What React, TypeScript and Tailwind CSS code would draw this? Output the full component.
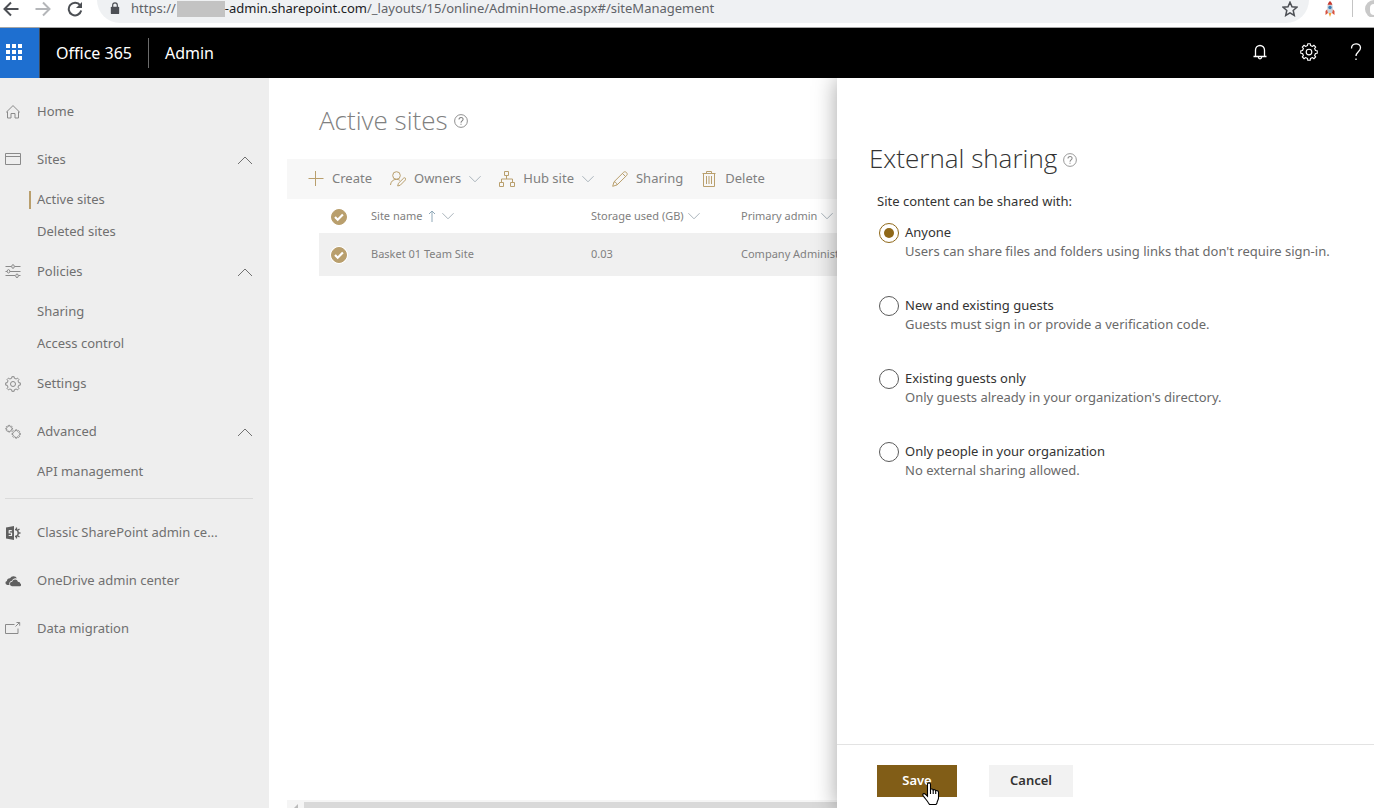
import React, { useState } from 'react';

function gearPath(cx: number, cy: number, outer: number, inner: number, teeth: number) {
  const points: string[] = [];
  const step = (Math.PI * 2) / teeth;
  const at = (r: number, a: number) => `${(cx + r * Math.sin(a)).toFixed(2)} ${(cy - r * Math.cos(a)).toFixed(2)}`;
  for (let i = 0; i < teeth; i++) {
    const a = i * step;
    points.push(at(inner, a - step * 0.28), at(outer, a - step * 0.2), at(outer, a + step * 0.2), at(inner, a + step * 0.28));
  }
  return `M${points.join('L')}Z`;
}

type IconProps = { className?: string; children?: React.ReactNode; size?: string };

function Icon({ className = '', children, size = 'size-4' }: IconProps) {
  return (
    <svg viewBox="0 0 16 16" fill="none" stroke="currentColor" strokeLinejoin="round" className={`${size} shrink-0 ${className}`} aria-hidden="true">
      {children}
    </svg>
  );
}

const HomeIcon = () => (
  <Icon>
    <path d="M1.2 8.3 8 1.6l6.800 6.700M2.500 7.500v6.500h3.500V9.500h4v4.500h3.500V7.500" />
  </Icon>
);
const SitesIcon = () => (
  <Icon>
    <path d="M.5 1.500h15v11H.5zM.5 4.500h15" />
  </Icon>
);
const PoliciesIcon = () => (
  <Icon>
    <path d="M.5 2.500h6M9.500 2.500h6M.5 7.500h1.500M5 7.500h10.500M.5 11.500h9.500M13.500 11.500h2" />
    <ellipse cx="8" cy="2.500" rx="1.300" ry="1.800" />
    <ellipse cx="3.500" cy="7.300" rx="1.300" ry="1.700" />
    <ellipse cx="12" cy="11.800" rx="1.300" ry="1.800" />
  </Icon>
);
const GearIcon = ({ size }: { size?: string }) => (
  <Icon size={size}>
    <path d={gearPath(8, 8, 7.4, 5.9, 8)} />
    <circle cx="8" cy="8" r="2.500" />
  </Icon>
);
const GearsIcon = () => (
  <Icon>
    <path d={gearPath(4.2, 4.700, 3.400, 2.500, 8)} />
    <path d={gearPath(11.2, 10, 4.200, 3.200, 8)} />
  </Icon>
);
const SharePointIcon = () => (
  <Icon>
    <path d="M1 2.500 9 1v14l-8-1.500z" fill="currentColor" stroke="none" />
    <path d="M6.800 5.700H4.200V8h2.300v2.500H3.700" stroke="#eee" strokeWidth="1.200" />
    <path d="M10 4.500c2 0 3.200 1.500 3.200 3.500S12 11.500 10 11.500" strokeWidth="1.500" />
    <path d="M11.500 2.500v2M13 5l1.500-1M13 8h2.500M13 11l1.500 1M11.500 11.500v2" strokeWidth="1.300" />
  </Icon>
);
const OneDriveIcon = () => (
  <Icon>
    <path d="M4.500 12H2.300a2.100 2.100 0 0 1-.4-4.100A3 3 0 0 1 5 5.200 4 4 0 0 1 12 5.500c-2.300-.8-4.300.2-5 2.200-2.200.1-3.300 2.300-2.500 4.300z" fill="currentColor" stroke="none" />
    <path d="M7 13.200a2.200 2.200 0 0 1 .2-4.400c.7-2.900 5-3 5.700-.1 1.400 0 2.300.7 2.300 1.900 1.300.4 1.200 2.500-.2 2.600z" fill="currentColor" stroke="none" />
  </Icon>
);
const MigrationIcon = () => (
  <Icon>
    <path d="M9.500 3.500H.5v9h12.500V7.500M10.500 5.500l4-4M11.500 1.500h3.200v3.200" />
  </Icon>
);
const PlusIcon = () => (
  <Icon>
    <path d="M.5 7.500h15M7.500 0v15" />
  </Icon>
);
const OwnersIcon = () => (
  <Icon>
    <circle cx="6.500" cy="4.500" r="3.800" />
    <path d="M.5 14c.2-3.200 2.500-5.700 6-5.700 1.400 0 2.400.4 3.300 1M7.700 15l.7-2.700 5.300-5.200c1.200-1 2.800.6 1.800 1.800l-5.200 5.300z" />
  </Icon>
);
const HubIcon = () => (
  <Icon>
    <path d="M5.500.5h4v4h-4zM.5 11.500h4v4h-4zM11.500 11.500h4v4h-4zM7.500 4.500V8M2.500 11.500V8h11v3.500" />
  </Icon>
);
const PencilIcon = () => (
  <Icon>
    <path d="M.7 15.300 2 10.800l9.700-9.600c1.700-1.500 4.600 1.300 3.100 3.100l-9.700 9.600zM2 10.800c1.700.2 2.900 1.400 3.100 3.100M10.500 2.500l3 3" />
  </Icon>
);
const TrashIcon = () => (
  <Icon>
    <path d="M1.500 2.500h13M5.500 2.500v-2h5v2M2.500 2.500v13h11v-13M5.500 5v8M8 5v8M10.500 5v8" />
  </Icon>
);
const ChevronDown = () => (
  <svg viewBox="0 0 12 12" fill="none" stroke="currentColor" className="size-3 shrink-0 text-[#aab4bc]" aria-hidden="true">
    <path d="M.4 3.200 6 8.800l5.600-5.600" />
  </svg>
);
const ChevronUp = () => (
  <Icon>
    <path d="M1 12l7-7 7 7" />
  </Icon>
);
const HelpIcon = ({ className = '' }: { className?: string }) => (
  <Icon size="size-[14px]" className={className}>
    <circle cx="8" cy="8" r="7.300" />
    <path d="M5.700 6.200c0-3.100 4.700-3 4.700-.2C10.400 8 8 7.800 8 10M8 11v1.400" strokeWidth="1.200" />
  </Icon>
);

function CheckCircle({ label }: { label: string }) {
  const [checked, setChecked] = useState(true);
  return (
    <label className="relative inline-flex size-4 align-middle">
      <input
        type="checkbox"
        aria-label={label}
        checked={checked}
        onChange={() => setChecked(!checked)}
        className="size-4 appearance-none rounded-full border border-[#b99f6d] ring-1 ring-white checked:bg-[#b99f6d]"
      />
      <svg viewBox="0 0 16 16" fill="none" stroke="white" strokeWidth="2.200" className="pointer-events-none absolute inset-0">
        <path d="m4 8 2.700 2.700 5.200-5.200" />
      </svg>
    </label>
  );
}

function NavGroup({ icon, label, expandable }: { icon: React.ReactNode; label: string; expandable?: boolean }) {
  const content = (
    <>
      <span className="text-[#8a8a8a]">{icon}</span>
      <span className="ml-4 flex-1 truncate text-left">{label}</span>
      {expandable && <ChevronUp />}
    </>
  );
  const rowClass = 'flex h-12 w-full items-center pr-4 pl-[5px]';
  return expandable ? (
    <button type="button" aria-expanded="true" className={rowClass}>{content}</button>
  ) : (
    <a href="#" className={rowClass}>{content}</a>
  );
}

function NavLink({ label, active }: { label: string; active?: boolean }) {
  return (
    <a href="#" className="flex h-8 items-center pl-[29px]">
      <span className={active ? 'h-[18px] w-0.5 bg-[#b99f6d]' : 'h-[18px] w-0.5'} />
      <span className="ml-1.5">{label}</span>
    </a>
  );
}

function BrowserBar() {
  return (
    <div className="flex h-7 shrink-0 items-start border-b border-[#a6a6a6] bg-white text-[#5f6368]">
      <div className="flex h-[18px] items-center gap-4 pl-[3px]">
        <button type="button" aria-label="Back">
          <Icon className="text-[#4c4f54]"><path d="M15.500 8H1.500M8 1.500 1.500 8 8 14.500" strokeWidth="2" strokeLinejoin="miter" /></Icon>
        </button>
        <button type="button" aria-label="Forward">
          <Icon className="text-[#b4b6b9]"><path d="M.5 8h14M8 1.500 14.500 8 8 14.500" strokeWidth="2" strokeLinejoin="miter" /></Icon>
        </button>
        <button type="button" aria-label="Reload">
          <Icon className="text-[#4c4f54]"><path d="M13.200 4.400A6.300 6.300 0 1 0 14.200 9.500" strokeWidth="2" /><path d="M15 1v6H9z" fill="currentColor" stroke="none" /></Icon>
        </button>
      </div>
      <div className="ml-[14px] flex h-[23px] flex-1 items-start rounded-b-full bg-[#eff1f3] pr-[11px] pl-[13px]">
        <svg viewBox="0 0 10 14" className="mt-0.5 h-[13px] w-[10px] text-[#4c4f54]" aria-hidden="true">
          <rect x="0.500" y="5" width="9" height="8" rx="1" fill="currentColor" />
          <path d="M2.500 5.500V3.500a2.500 2.500 0 0 1 5 0v2" fill="none" stroke="currentColor" strokeWidth="1.300" />
        </svg>
        <div className="ml-[11px] flex h-[18px] flex-1 items-center text-[13px] whitespace-nowrap">
          <span>https://</span>
          <span className="ml-px h-4 w-12 bg-[#c3c3c3]" />
          <span className="text-[#202124]">-admin.sharepoint.com</span>
          <span>/_layouts/15/online/AdminHome.aspx#/siteManagement</span>
        </div>
        <button type="button" aria-label="Bookmark this page" className="mt-px">
          <Icon className="text-[#4c4f54]"><path d="m8 1.200 2 4.500 4.900.5-3.700 3.300 1.100 4.900L8 11.900l-4.300 2.500 1.100-4.900L1.100 6.200 6 5.700z" strokeWidth="1.500" strokeLinejoin="miter" /></Icon>
        </button>
      </div>
      <button type="button" aria-label="Rocket extension" className="ml-[13px] pt-px">
        <svg viewBox="0 0 16 16" className="size-4" aria-hidden="true">
          <path d="M5.500 8 3.500 10v4l2.500-2zM10.500 8l2 2v4L10 12z" fill="#d9533f" />
          <path d="M8 0c3 3 3.500 7 2 12H6C4.500 7 5 3 8 0z" fill="#c9d3dc" />
          <path d="M8 0c1.200 1 2 2.200 2.400 3.700H5.600C6 2.200 6.800 1 8 0z" fill="#c9382d" />
          <circle cx="8" cy="6.500" r="1.700" fill="#3c7db5" />
          <path d="M6.500 12h3L8 16z" fill="#eda73a" />
        </svg>
      </button>
      <span className="ml-[14px] h-[17px] w-px bg-[#c4c4c4]" />
      <span className="ml-3 h-[17px] w-[9px] overflow-hidden">
        <span className="flex size-[18px] items-center justify-center rounded-full bg-[#c9c9c9]">
          <span className="h-[11px] w-2 rounded-full bg-white" />
        </span>
      </span>
    </div>
  );
}

function SuiteHeader() {
  const dots = [0, 6, 12];
  return (
    <header className="flex h-[50px] shrink-0 items-center bg-black text-white">
      <button type="button" aria-label="App launcher" className="flex h-full w-10 items-center border-r border-[#3c4a5c] bg-[#1e6fd0] pb-0.5 pl-1.5">
        <svg viewBox="0 0 16 16" fill="currentColor" className="size-4" aria-hidden="true">
          {dots.map((y) => dots.map((x) => <rect key={`${x}-${y}`} x={x} y={y} width="4" height="4" />))}
        </svg>
      </button>
      <a href="#" className="px-4 text-base">Office 365</a>
      <span className="h-[30px] w-px bg-[#6b6b6b]" />
      <a href="#" className="px-4 text-base">Admin</a>
      <div className="ml-auto flex items-center gap-8 pr-3 pb-[3px]">
        <button type="button" aria-label="Notifications">
          <Icon><path d="M1.500 12.500h13M3.500 12.500V6a4.500 4.500 0 0 1 9 0v6.500M6.300 13c.3 2.500 3.100 2.500 3.400 0" strokeWidth="1.300" /></Icon>
        </button>
        <button type="button" aria-label="Settings"><GearIcon size="size-[18px]" /></button>
        <button type="button" aria-label="Help">
          <svg viewBox="0 0 12 18" fill="none" stroke="currentColor" strokeWidth="1.300" className="h-[18px] w-3" aria-hidden="true">
            <path d="M1.500 5.500c0-6 9-6 9-.8 0 4-4.500 4-4.500 8.300M6 15.500V17" />
          </svg>
        </button>
      </div>
    </header>
  );
}

function Sidebar() {
  return (
    <nav className="w-[269px] shrink-0 bg-[#eee] pt-[10px] text-[13px] text-[#707070]">
      <NavGroup icon={<HomeIcon />} label="Home" />
      <NavGroup icon={<SitesIcon />} label="Sites" expandable />
      <NavLink label="Active sites" active />
      <NavLink label="Deleted sites" />
      <NavGroup icon={<PoliciesIcon />} label="Policies" expandable />
      <NavLink label="Sharing" />
      <NavLink label="Access control" />
      <NavGroup icon={<GearIcon />} label="Settings" />
      <NavGroup icon={<GearsIcon />} label="Advanced" expandable />
      <NavLink label="API management" />
      <hr className="mt-[10px] mr-4 mb-[10px] ml-[5px] border-[#dadada]" />
      <div className="text-[#707070] [&_svg]:text-[#606060]">
        <NavGroup icon={<SharePointIcon />} label="Classic SharePoint admin ce..." />
        <NavGroup icon={<OneDriveIcon />} label="OneDrive admin center" />
      </div>
      <NavGroup icon={<MigrationIcon />} label="Data migration" />
    </nav>
  );
}

function Command({ icon, label, menu }: { icon: React.ReactNode; label: string; menu?: boolean }) {
  return (
    <button type="button" className="flex items-center gap-2">
      <span className="text-[#b99f6d]">{icon}</span>
      <span>{label}</span>
      {menu && <ChevronDown />}
    </button>
  );
}

function ActiveSites() {
  return (
    <main className="flex min-w-0 flex-1 flex-col pl-[18px] text-[#808080]">
      <div className="flex h-[81px] items-center gap-1.5 pt-1 pl-8">
        <h1 className="font-['Open_Sans',sans-serif] text-[26px] font-light">Active sites</h1>
        <HelpIcon />
      </div>
      <div className="flex h-10 items-center gap-[18px] bg-[#f7f7f7] pl-[21px] text-[13px]">
        <Command icon={<PlusIcon />} label="Create" />
        <Command icon={<OwnersIcon />} label="Owners" menu />
        <Command icon={<HubIcon />} label="Hub site" menu />
        <Command icon={<PencilIcon />} label="Sharing" />
        <Command icon={<TrashIcon />} label="Delete" />
      </div>
      <div className="pl-8">
        <table className="w-full table-fixed text-left text-[11px]">
          <thead>
            <tr className="h-[34px]">
              <th className="w-[52px] pl-3 font-normal"><CheckCircle label="Select all sites" /></th>
              <th className="w-[220px] font-normal">
                <span className="flex items-center gap-1.5">
                  Site name
                  <svg viewBox="0 0 8 12" fill="none" stroke="currentColor" className="h-3 w-2 text-[#8fa8b8]" aria-hidden="true"><path d="M4 12V1M1 4l3-3 3 3" /></svg>
                  <ChevronDown />
                </span>
              </th>
              <th className="w-[150px] font-normal"><span className="flex items-center gap-1">Storage used (GB) <ChevronDown /></span></th>
              <th className="font-normal"><span className="flex items-center gap-1">Primary admin <ChevronDown /></span></th>
            </tr>
          </thead>
          <tbody>
            <tr className="h-[43px] bg-[#f0f0f0]">
              <td className="pl-3"><CheckCircle label="Select Basket 01 Team Site" /></td>
              <td>Basket 01 Team Site</td>
              <td>0.03</td>
              <td>Company Administrator</td>
            </tr>
          </tbody>
        </table>
      </div>
      <div className="mt-auto flex h-2 items-end bg-[#f5f5f5]">
        <span className="flex h-1.5 w-[17px] items-end pl-[7px]">
          <svg viewBox="0 0 4 4" className="size-1" aria-hidden="true"><path d="M4 0v4H0z" fill="#bbb" /></svg>
        </span>
        <span className="h-1.5 flex-1 bg-[#d9d9d9]" />
      </div>
    </main>
  );
}

const options = [
  { id: 'anyone', title: 'Anyone', detail: "Users can share files and folders using links that don't require sign-in." },
  { id: 'guests', title: 'New and existing guests', detail: 'Guests must sign in or provide a verification code.' },
  { id: 'existing', title: 'Existing guests only', detail: "Only guests already in your organization's directory." },
  { id: 'organization', title: 'Only people in your organization', detail: 'No external sharing allowed.' },
];

function SharingPanel() {
  const [selected, setSelected] = useState('anyone');
  return (
    <aside aria-labelledby="panel-title" className="absolute inset-y-0 right-0 flex w-[537px] flex-col bg-white text-[13px] text-[#333] shadow-[0_0_22px_rgba(0,0,0,0.36)]">
      <div className="flex items-center gap-1.5 pt-[60px] pl-8">
        <h2 id="panel-title" className="font-['Open_Sans',sans-serif] text-[26px] leading-10 font-light">External sharing</h2>
        <HelpIcon className="mt-1 text-[#8a8a8a]" />
      </div>
      <fieldset className="mt-[13px] flex-1 pl-10">
        <legend className="leading-5">Site content can be shared with:</legend>
        <div className="mt-3 flex flex-col gap-[35px] pl-0.5">
          {options.map((option) => (
            <div key={option.id} className="flex gap-1.5">
              <input
                id={option.id}
                type="radio"
                name="sharing"
                checked={selected === option.id}
                onChange={() => setSelected(option.id)}
                className="size-5 shrink-0 appearance-none rounded-full border border-[#5a5a5a] bg-clip-content p-1 checked:border-[#8f6819] checked:bg-[#8f6819]"
              />
              <label htmlFor={option.id} className="flex flex-col leading-[19px]">
                <span>{option.title}</span>
                <span className="text-[#6a6a6a]">{option.detail}</span>
              </label>
            </div>
          ))}
        </div>
      </fieldset>
      <footer className="flex h-16 gap-8 border-t border-[#e3e3e3] pt-5 pl-10 font-semibold">
        <button type="button" className="relative h-8 w-20 bg-[#815d17] text-white">
          Save
          <svg viewBox="0 0 18 24" className="absolute top-[17px] left-[45px] h-6 w-[18px]" aria-hidden="true">
            <path d="M5.500 2c0-1.500 3-1.500 3 0v5.500c.7-.8 2.500-.5 2.700.5.800-.7 2.300-.3 2.500.7 1-.6 2.800 0 2.800 1.500V16c0 2-1.500 3-1.500 5l-1 1.500H7.500L6.500 21c-1-2-3.500-4.500-5.500-7.500-.7-1.700 1-2.500 2.300-1.300l2.200 2z" fill="#fff" stroke="#000" strokeWidth="1.100" />
            <path d="M8.500 7.500V12M11.200 8v4M13.700 9v3" stroke="#000" strokeWidth="1.100" />
          </svg>
        </button>
        <button type="button" className="h-8 w-[84px] bg-[#f2f2f2]">Cancel</button>
      </footer>
    </aside>
  );
}

export default function App() {
  return (
    <div className="flex h-screen flex-col overflow-hidden bg-white font-['Noto_Sans','Open_Sans',sans-serif]">
      <BrowserBar />
      <SuiteHeader />
      <div className="relative flex min-h-0 flex-1 overflow-hidden">
        <Sidebar />
        <ActiveSites />
        <SharingPanel />
      </div>
    </div>
  );
}
